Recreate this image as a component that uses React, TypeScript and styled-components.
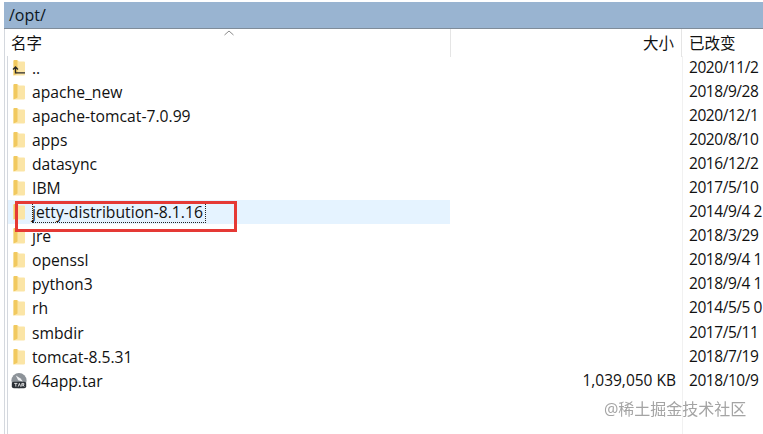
import React from "react";
import styled, { createGlobalStyle } from "styled-components";

const Global = createGlobalStyle`
  html, body { margin: 0; padding: 0; background: #fff; }
  body { width: 763px; height: 434px; overflow: hidden; font-family: "Open Sans", "Noto Sans", "Noto Sans CJK SC", sans-serif; color: #111; }
`;

const Window = styled.div`
  position: relative;
  width: 763px;
  height: 434px;
  padding: 2px 0 0 4px;
  box-sizing: border-box;
  overflow: hidden;
  background: #fff;
`;
const PathBar = styled.div`
  height: 26px;
  background: #99b4d1;
  border-bottom: 1px solid #7f8c99;
  font-size: 16px;
  line-height: 26px;
  padding-left: 5px;
  color: #0c1622;
`;
const Panel = styled.div`
  border-left: 1px solid #d4d8de;
  height: 405px;
`;
const Header = styled.div`
  display: grid;
  grid-template-columns: 446px 231px 85px;
  height: 27px;
  font-size: 15.5px;
  line-height: 28px;
  position: relative;
`;
const HeaderCell = styled.div<{ $right?: boolean; $date?: boolean }>`
  padding: ${(p) => (p.$right ? "0 7px 0 0" : p.$date ? "0 0 0 7px" : "0 0 0 6px")};
  text-align: ${(p) => (p.$right ? "right" : "left")};
  border-right: 1px solid #e5e5e5;
  white-space: nowrap;
`;
const SortArrow = styled.svg`
  position: absolute;
  left: 219px;
  top: 1px;
`;
const List = styled.div`
  margin-left: 2px;
  border-left: 1px solid #d4d8de;
  height: 378px;
  position: relative;
`;
const Guide = styled.div`
  position: absolute;
  top: 0;
  bottom: 0;
  left: 674px;
  width: 1px;
  background: #f1f1f1;
`;
const Row = styled.div`
  display: grid;
  grid-template-columns: 442px 232px 85px;
  height: 24.05px;
  line-height: 23px;
  white-space: nowrap;
`;
const NameCell = styled.div<{ $selected?: boolean }>`
  display: flex;
  align-items: center;
  padding-left: 3px;
  background: ${(p) => (p.$selected ? "#e5f3ff" : "transparent")};
  font-size: 15.7px;
`;
const IconSlot = styled.span`
  width: 16px;
  height: 22px;
  display: flex;
  align-items: center;
  justify-content: center;
  flex: none;
  margin-right: 5px;
`;
const Name = styled.span<{ $focus?: boolean }>`
  line-height: 22px;
  outline: ${(p) => (p.$focus ? "1px dotted #222" : "none")};
  outline-offset: -1px;
  padding-right: 3px;
`;
const SizeCell = styled.div`
  text-align: right;
  padding-right: 6px;
  font-size: 15.5px;
`;
const DateCell = styled.div`
  padding-left: 7px;
  font-size: 15.5px;
  letter-spacing: -0.45px;
  overflow: hidden;
`;
const RedBox = styled.div`
  position: absolute;
  left: 15px;
  top: 201px;
  width: 222px;
  height: 31px;
  box-sizing: border-box;
  border: 3px solid #e53935;
`;
const Watermark = styled.div`
  position: absolute;
  left: 604px;
  top: 399px;
  font-size: 16px;
  line-height: 20px;
  color: #a4a4a4;
  filter: blur(0.4px);
  white-space: nowrap;
`;

const Folder = ({ up }: { up?: boolean }) => (
  <svg width="14" height="18" viewBox="0 0 14 18">
    <path d="M1.5 2 Q1.5 1 2.5 1 H5.5 L7 2.5 H12 Q13 2.5 13 3.5 V15.5 Q13 16.5 12 16.5 H1.5 Z" fill="#fbe5a6" />
    <path d="M1.5 2 Q1.5 1 2.5 1 H5 L5.5 2.5 V14.5 Q4 15.5 1.5 16.5 Z" fill="#f1c95f" />
    {up && <path d="M1 10.5 L3.5 8 L6 10.5 M3.5 8.5 V13.8 H13" stroke="#2a2a2a" strokeWidth="1.3" fill="none" />}
  </svg>
);

const TarIcon = () => (
  <svg width="20" height="20" viewBox="0 0 20 20">
    <circle cx="10" cy="9.5" r="9.5" fill="#8d9399" />
    <path d="M6 3 L12 7 L15 11 L9 9 Z" fill="#eef0f2" />
    <rect x="1" y="11" width="18" height="8" rx="2.5" fill="#2b3036" />
    <path d="M4 13 H8 M6 13 V17 M9 17 L10.5 13 L12 17 M13.5 17 V13 H16 V15 H13.5 M15 15 L16.5 17" stroke="#fff" strokeWidth="1" fill="none" />
  </svg>
);

const rows = [
  { name: "..", date: "2020/11/2", up: true },
  { name: "apache_new", date: "2018/9/28" },
  { name: "apache-tomcat-7.0.99", date: "2020/12/1" },
  { name: "apps", date: "2020/8/10" },
  { name: "datasync", date: "2016/12/2" },
  { name: "IBM", date: "2017/5/10" },
  { name: "jetty-distribution-8.1.16", date: "2014/9/4 2", selected: true },
  { name: "jre", date: "2018/3/29" },
  { name: "openssl", date: "2018/9/4 1" },
  { name: "python3", date: "2018/9/4 1" },
  { name: "rh", date: "2014/5/5 0" },
  { name: "smbdir", date: "2017/5/11" },
  { name: "tomcat-8.5.31", date: "2018/7/19" },
  { name: "64app.tar", date: "2018/10/9", size: "1,039,050 KB", tar: true },
];

export default function App() {
  return (
    <Window>
      <Global />
      <PathBar>/opt/</PathBar>
      <Panel>
        <Header>
          <HeaderCell>名字</HeaderCell>
          <HeaderCell $right>大小</HeaderCell>
          <HeaderCell $date>已改变</HeaderCell>
          <SortArrow width="10" height="6" viewBox="0 0 10 6">
            <path d="M0.5 5 L5 1 L9.5 5" stroke="#8a8a8a" fill="none" />
          </SortArrow>
        </Header>
        <List>
          <Guide />
          {rows.map((r) => (
            <Row key={r.name}>
              <NameCell $selected={r.selected}>
                <IconSlot>{r.tar ? <TarIcon /> : <Folder up={r.up} />}</IconSlot>
                <Name $focus={r.selected}>{r.name}</Name>
              </NameCell>
              <SizeCell>{r.size}</SizeCell>
              <DateCell>{r.date}</DateCell>
            </Row>
          ))}
        </List>
      </Panel>
      <RedBox />
      <Watermark>@稀土掘金技术社区</Watermark>
    </Window>
  );
}
